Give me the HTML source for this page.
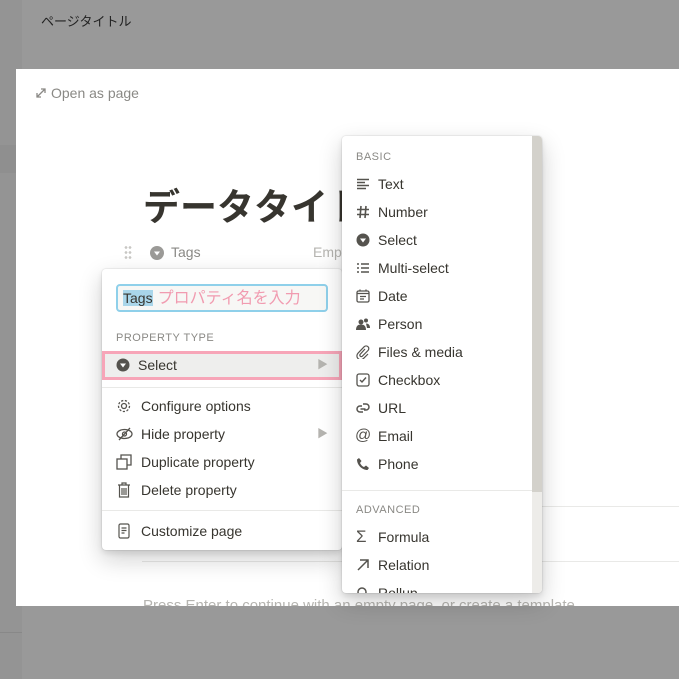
<!DOCTYPE html>
<html><head><meta charset="utf-8"><style>
*{margin:0;padding:0;box-sizing:border-box}
body{width:679px;height:679px;overflow:hidden;background:#999;font-family:"Liberation Sans","Noto Sans CJK JP",sans-serif;position:relative;color:#37352f}
.a{position:absolute}
.strip{left:0;top:0;width:22px;height:679px;background:#949494}
.modal{left:16px;top:69px;width:663px;height:537px;background:#fff;overflow:hidden}
.menu{background:#fff;border-radius:4px;box-shadow:0 0 0 1px rgba(15,15,15,.05),0 3px 6px rgba(15,15,15,.1),0 9px 24px rgba(15,15,15,.2)}
.it{position:absolute;left:0;height:28px;line-height:28px;font-size:14px;color:#37352f;white-space:nowrap}
.ic{position:absolute;top:7px;width:14px;height:14px}
.hd{font-size:11px;color:#8a8985;letter-spacing:.5px;position:absolute}
</style></head><body>
<div class="a strip"></div>
<div class="a" style="left:0;top:145px;width:22px;height:28px;background:#8f8f8f"></div>
<div class="a" style="left:0;top:632px;width:22px;height:1px;background:#888"></div>
<div class="a" style="left:41px;top:11px;font-size:13px;color:#222">ページタイトル</div>
<div class="a modal">
  <div class="a" style="left:19px;top:16px;font-size:14px;color:#8a8985">
    <svg width="12" height="12" viewBox="0 0 12 12" style="vertical-align:-1px;margin-right:4px"><path d="M2 10L10 2M6 2h4v4M2 6v4h4" stroke="#8a8985" stroke-width="1.3" fill="none"/></svg>Open as page</div>
  <div class="a" style="left:127px;top:108px;font-size:37px;font-weight:bold;color:#37352f">データタイトル</div>
  <div class="a" style="left:108px;top:176px;width:8px;height:16px;background:radial-gradient(circle,#c8c7c4 1.2px,transparent 1.5px) 0 0/4px 5px"></div>
  <svg class="a" style="left:134px;top:177px" width="14" height="14" viewBox="0 0 14 14"><circle cx="7" cy="7" r="7" fill="#9b9a97"/><path d="M4 5.5h6L7 9.5z" fill="#fff"/></svg>
  <div class="a" style="left:155px;top:175px;font-size:14px;color:#8a8985">Tags</div>
  <div class="a" style="left:297px;top:175px;font-size:14px;color:#b5b4b0">Empty</div>
  <div class="a" style="left:126px;top:437px;width:540px;height:1px;background:#e9e9e7"></div>
  <div class="a" style="left:126px;top:492px;width:540px;height:1px;background:#e9e9e7"></div>
  <div class="a" style="left:127px;top:528px;font-size:15px;color:#b5b4b0;white-space:nowrap">Press Enter to continue with an empty page, or create a template</div>
</div>

<!-- left menu -->
<div class="a menu" style="left:102px;top:269px;width:240px;height:281px">
  <div class="a" style="left:14px;top:15px;width:212px;height:28px;border:2px solid #8fd0ea;border-radius:4px;background:#f7f7f5;font-size:14px;line-height:24px;padding-left:5px;white-space:nowrap"><span style="background:#a9d6ea">Tags</span><span style="color:#f19bb0;font-size:16px;margin-left:5px">プロパティ名を入力</span></div>
  <div class="hd" style="left:14px;top:63px">PROPERTY TYPE</div>
  <div class="a" style="left:0;top:82px;width:240px;height:29px;background:#eeeeed;border:3px solid #f7a5b8"></div>
  <div class="it" style="top:82px;width:240px">
    <svg class="ic" style="left:14px" viewBox="0 0 14 14"><circle cx="7" cy="7" r="6.5" fill="#55534e"/><path d="M4 5.5h6L7 9.5z" fill="#fff"/></svg>
    <span style="position:absolute;left:36px">Select</span>
    <span style="position:absolute;left:215px;color:#b5b4b0;font-size:11px">▶</span></div>
  <div class="a" style="left:0;top:118px;width:240px;height:1px;background:#e9e9e7"></div>
  <div class="it" style="top:123px;width:240px">
    <svg class="ic" style="left:14px;width:16px;height:16px;top:6px" viewBox="0 0 16 16"><circle cx="8" cy="8" r="2.5" fill="none" stroke="#55534e" stroke-width="1.3"/><circle cx="8" cy="8" r="5.5" fill="none" stroke="#55534e" stroke-width="1.3" stroke-dasharray="2.2 1.6"/></svg>
    <span style="position:absolute;left:39px">Configure options</span></div>
  <div class="it" style="top:151px;width:240px">
    <svg class="ic" style="left:14px;width:17px;height:16px;top:6px" viewBox="0 0 17 16"><ellipse cx="8.5" cy="8" rx="7.5" ry="4.5" fill="none" stroke="#55534e" stroke-width="1.3"/><circle cx="8.5" cy="8" r="2" fill="none" stroke="#55534e" stroke-width="1.3"/><path d="M3 14L14 2" stroke="#55534e" stroke-width="1.3"/></svg>
    <span style="position:absolute;left:39px">Hide property</span>
    <span style="position:absolute;left:215px;color:#b5b4b0;font-size:11px">▶</span></div>
  <div class="it" style="top:179px;width:240px">
    <svg class="ic" style="left:14px;width:16px;height:16px;top:6px" viewBox="0 0 16 16"><rect x="1" y="5" width="10" height="10" fill="none" stroke="#55534e" stroke-width="1.3"/><path d="M5 5V1h10v10h-4" fill="none" stroke="#55534e" stroke-width="1.3"/></svg>
    <span style="position:absolute;left:39px">Duplicate property</span></div>
  <div class="it" style="top:207px;width:240px">
    <svg class="ic" style="left:15px;width:14px;height:16px;top:6px" viewBox="0 0 14 16"><path d="M1 3h12M5 3V1h4v2M2.5 3v12h9V3M5 6v7M7 6v7M9 6v7" fill="none" stroke="#55534e" stroke-width="1.2"/></svg>
    <span style="position:absolute;left:39px">Delete property</span></div>
  <div class="a" style="left:0;top:241px;width:240px;height:1px;background:#e9e9e7"></div>
  <div class="it" style="top:248px;width:240px">
    <svg class="ic" style="left:16px;width:12px;height:16px;top:6px" viewBox="0 0 12 16"><rect x="1" y="1" width="10" height="14" rx="1.5" fill="none" stroke="#55534e" stroke-width="1.2"/><path d="M3.5 5h5M3.5 7.5h5M3.5 10h3" stroke="#55534e" stroke-width="1.2"/></svg>
    <span style="position:absolute;left:39px">Customize page</span></div>
</div>

<!-- right menu -->
<div class="a menu" style="left:342px;top:136px;width:200px;height:457px;overflow:hidden">
  <div class="a" style="left:190px;top:0;width:10px;height:457px;background:#edece9"></div>
  <div class="a" style="left:190px;top:0;width:10px;height:356px;background:#d3d1cb"></div>
  <div class="hd" style="left:14px;top:15px">BASIC</div>
  <div class="it" style="top:34px;width:190px"><svg class="ic" style="left:14px" viewBox="0 0 14 14"><path d="M1 2.5h12M1 5.5h8M1 8.5h12M1 11.5h9" stroke="#55534e" stroke-width="1.6"/></svg><span style="position:absolute;left:36px">Text</span></div>
  <div class="it" style="top:62px;width:190px"><svg class="ic" style="left:14px" viewBox="0 0 14 14"><path d="M5 1L4 13M10 1L9 13M1 4.5h12M1 9.5h12" stroke="#55534e" stroke-width="1.6"/></svg><span style="position:absolute;left:36px">Number</span></div>
  <div class="it" style="top:90px;width:190px"><svg class="ic" style="left:14px" viewBox="0 0 14 14"><circle cx="7" cy="7" r="6.5" fill="#55534e"/><path d="M4 5.5h6L7 9.5z" fill="#fff"/></svg><span style="position:absolute;left:36px">Select</span></div>
  <div class="it" style="top:118px;width:190px"><svg class="ic" style="left:14px" viewBox="0 0 14 14"><path d="M1 3h2M1 7h2M1 11h2M5 3h8M5 7h8M5 11h8" stroke="#55534e" stroke-width="1.4"/></svg><span style="position:absolute;left:36px">Multi-select</span></div>
  <div class="it" style="top:146px;width:190px"><svg class="ic" style="left:14px" viewBox="0 0 14 14"><rect x="1" y="2" width="12" height="11" rx="1.5" fill="none" stroke="#55534e" stroke-width="1.3"/><path d="M1 4.5h12M4 7.5h6M4 10h4M4 0.5v2M10 0.5v2" stroke="#55534e" stroke-width="1.3"/></svg><span style="position:absolute;left:36px">Date</span></div>
  <div class="it" style="top:174px;width:190px"><svg class="ic" style="left:14px" viewBox="0 0 14 14"><circle cx="5" cy="5" r="2.5" fill="#55534e"/><path d="M0 13c0-4 2-5.5 5-5.5s5 1.5 5 5.5z" fill="#55534e"/><circle cx="10" cy="3.5" r="2" fill="#55534e"/><path d="M10 6.5c2.5 0 4 1.5 4 4.5h-3" fill="#55534e"/></svg><span style="position:absolute;left:36px">Person</span></div>
  <div class="it" style="top:202px;width:190px"><svg class="ic" style="left:14px" viewBox="0 0 14 14"><path d="M9 4L4 9.5a1.5 1.5 0 002 2l6-6a2.6 2.6 0 00-3.8-3.8L2 8.2a3.8 3.8 0 005.4 5.4L12 9" fill="none" stroke="#55534e" stroke-width="1.2"/></svg><span style="position:absolute;left:36px">Files &amp; media</span></div>
  <div class="it" style="top:230px;width:190px"><svg class="ic" style="left:14px" viewBox="0 0 14 14"><rect x="1" y="1" width="12" height="12" rx="2" fill="none" stroke="#55534e" stroke-width="1.3"/><path d="M4 7l2 2 4-4.5" fill="none" stroke="#55534e" stroke-width="1.4"/></svg><span style="position:absolute;left:36px">Checkbox</span></div>
  <div class="it" style="top:258px;width:190px"><svg class="ic" style="left:14px" viewBox="0 0 14 14"><path d="M6 5H4a3 3 0 000 6h3M8 9h2a3 3 0 000-6H7M4.5 8h5" fill="none" stroke="#55534e" stroke-width="1.5"/></svg><span style="position:absolute;left:36px">URL</span></div>
  <div class="it" style="top:286px;width:190px"><span style="position:absolute;left:13px;font-size:16px;color:#55534e">@</span><span style="position:absolute;left:36px">Email</span></div>
  <div class="it" style="top:314px;width:190px"><svg class="ic" style="left:14px" viewBox="0 0 14 14"><path d="M3 1l2.5 3-1.5 2c1 2 2.5 3.5 4 4l2-1.5 3 2.5-1.5 2C6 13 1 8 1 2.5z" fill="#55534e"/></svg><span style="position:absolute;left:36px">Phone</span></div>
  <div class="a" style="left:0;top:354px;width:190px;height:1px;background:#e9e9e7"></div>
  <div class="hd" style="left:14px;top:368px">ADVANCED</div>
  <div class="it" style="top:387px;width:190px"><span style="position:absolute;left:14px;font-size:17px;color:#55534e">Σ</span><span style="position:absolute;left:36px">Formula</span></div>
  <div class="it" style="top:415px;width:190px"><svg class="ic" style="left:14px" viewBox="0 0 14 14"><path d="M2 12L12 2M4 2h8v8" fill="none" stroke="#55534e" stroke-width="1.5"/></svg><span style="position:absolute;left:36px">Relation</span></div>
  <div class="it" style="top:443px;width:190px"><svg class="ic" style="left:14px" viewBox="0 0 14 14"><circle cx="6" cy="6" r="4" fill="none" stroke="#55534e" stroke-width="1.5"/></svg><span style="position:absolute;left:36px">Rollup</span></div>
</div>
</body></html>
